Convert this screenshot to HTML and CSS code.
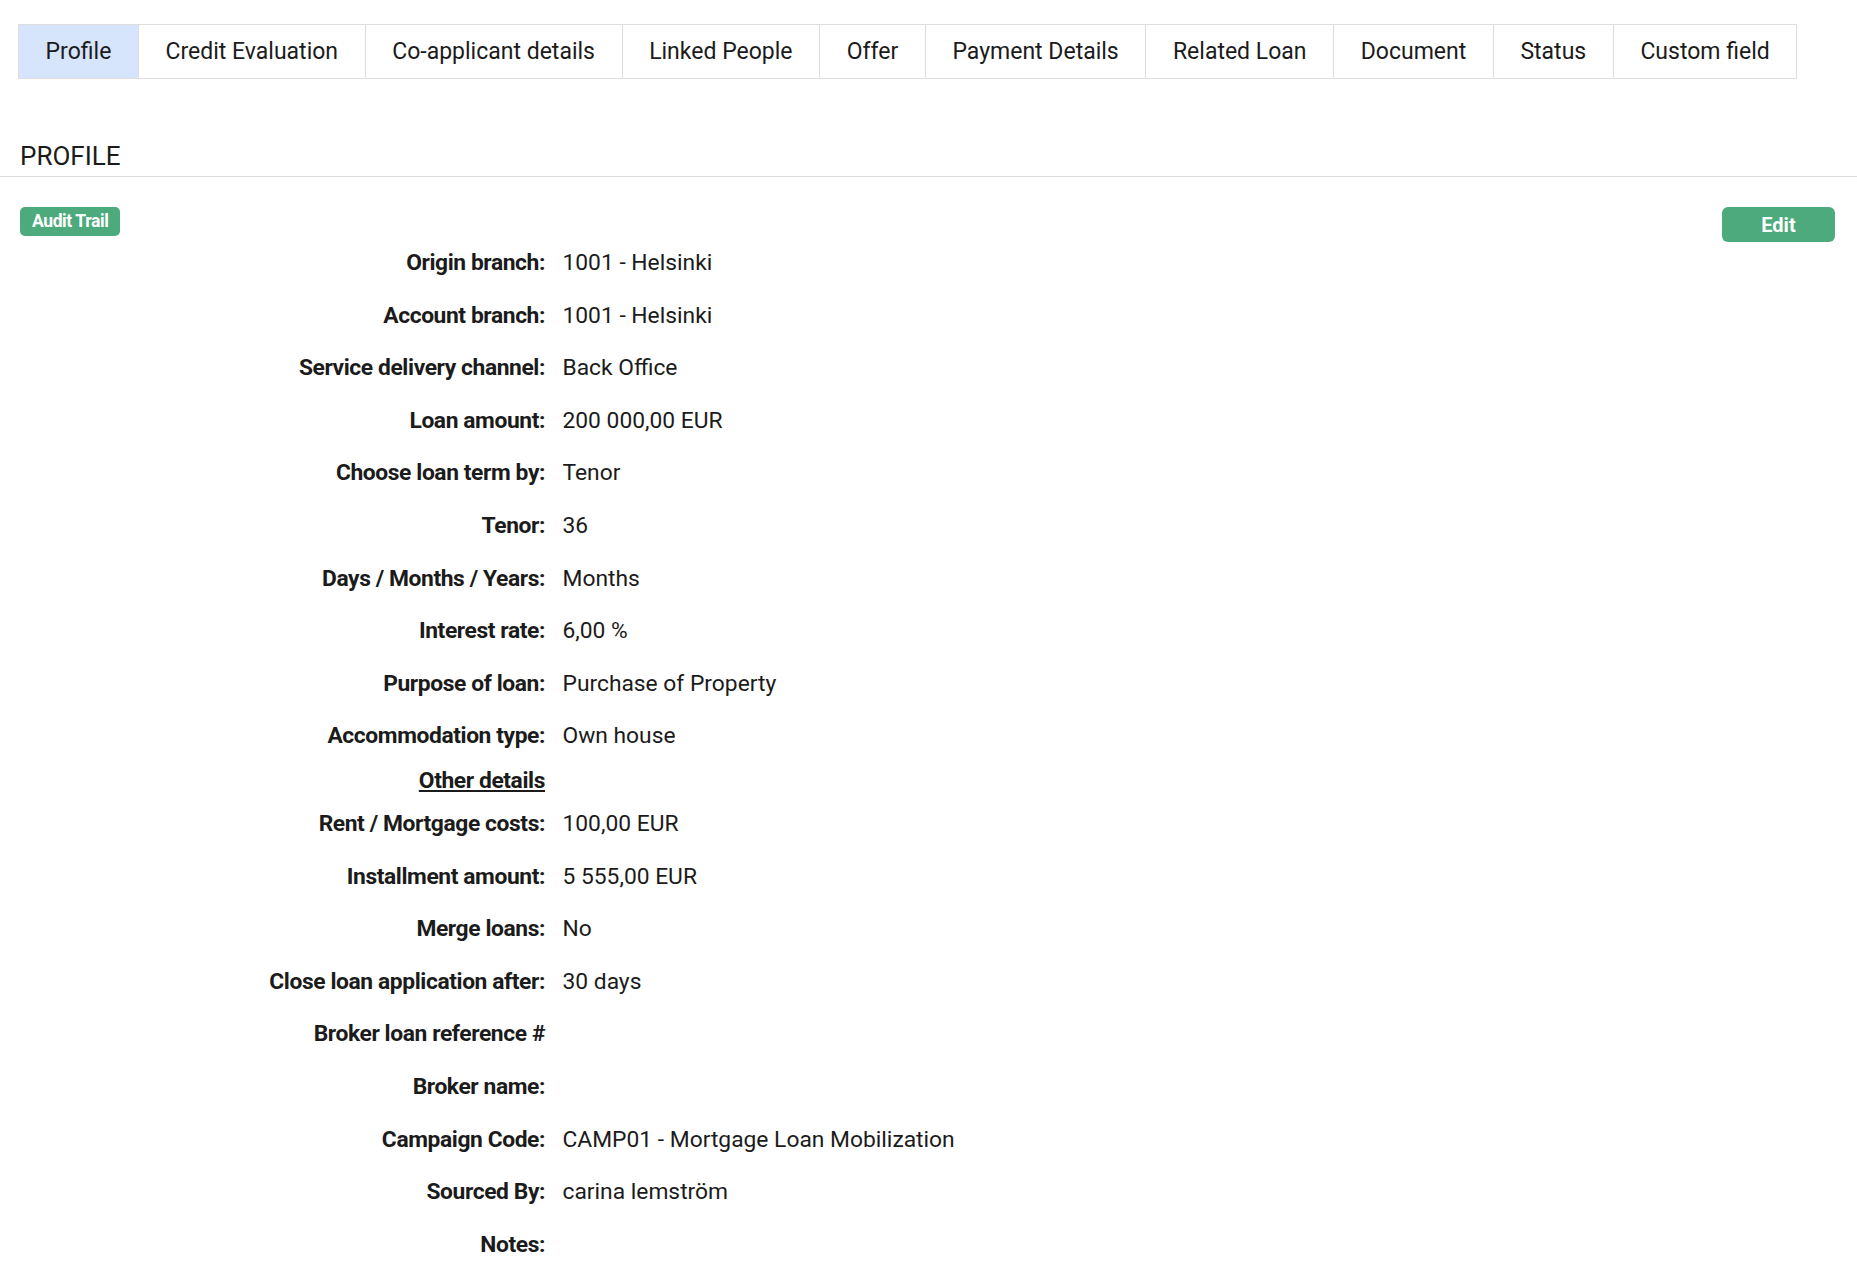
FILE: index.html
```html
<!DOCTYPE html>
<html lang="en">
<head>
    <meta charset="utf-8">
    <title>Loan application - Profile</title>
    <link rel="stylesheet" href="styles.css">
</head>
<body>
<ul class="tabs">
    <li class="tab active">Profile</li>
    <li class="tab">Credit Evaluation</li>
    <li class="tab">Co-applicant details</li>
    <li class="tab">Linked People</li>
    <li class="tab">Offer</li>
    <li class="tab">Payment Details</li>
    <li class="tab">Related Loan</li>
    <li class="tab">Document</li>
    <li class="tab">Status</li>
    <li class="tab">Custom field</li>
</ul>

<h2 class="section-title">PROFILE</h2>

<div class="profile">
    <div class="toolbar">
        <a class="badge" href="#">Audit Trail</a>
        <button class="btn-edit" type="button">Edit</button>
    </div>
    <dl class="details">
        <div class="row"><dt>Origin branch:</dt><dd>1001 - Helsinki</dd></div>
        <div class="row"><dt>Account branch:</dt><dd>1001 - Helsinki</dd></div>
        <div class="row"><dt>Service delivery channel:</dt><dd>Back Office</dd></div>
        <div class="row"><dt>Loan amount:</dt><dd>200 000,00 EUR</dd></div>
        <div class="row"><dt>Choose loan term by:</dt><dd>Tenor</dd></div>
        <div class="row"><dt>Tenor:</dt><dd>36</dd></div>
        <div class="row"><dt>Days / Months / Years:</dt><dd>Months</dd></div>
        <div class="row"><dt>Interest rate:</dt><dd>6,00 %</dd></div>
        <div class="row"><dt>Purpose of loan:</dt><dd>Purchase of Property</dd></div>
        <div class="row"><dt>Accommodation type:</dt><dd>Own house</dd></div>
        <div class="subhead"><dt><a href="#">Other details</a></dt></div>
        <div class="row"><dt>Rent / Mortgage costs:</dt><dd>100,00 EUR</dd></div>
        <div class="row"><dt>Installment amount:</dt><dd>5 555,00 EUR</dd></div>
        <div class="row"><dt>Merge loans:</dt><dd>No</dd></div>
        <div class="row"><dt>Close loan application after:</dt><dd>30 days</dd></div>
        <div class="row"><dt>Broker loan reference #</dt><dd></dd></div>
        <div class="row"><dt>Broker name:</dt><dd></dd></div>
        <div class="row"><dt>Campaign Code:</dt><dd>CAMP01 - Mortgage Loan Mobilization</dd></div>
        <div class="row"><dt>Sourced By:</dt><dd>carina lemström</dd></div>
        <div class="row"><dt>Notes:</dt><dd></dd></div>
    </dl>
</div>
</body>
</html>
```

FILE: styles.css
```css
/* Page */
body {
    margin: 0;
    font-family: Roboto, "Liberation Sans", sans-serif;
    font-size: 22.8px;
    color: #1b1b1b;
    background: #fff;
}

/* Tabs */
.tabs {
    display: flex;
    margin: 24px 0 0 18px;
    padding: 0;
    list-style: none;
}
.tab {
    padding: 0 26.6px;
    font-size: 23px;
    line-height: 53px;
    border: 1px solid #dedede;
    border-left: none;
    white-space: nowrap;
}
.tab:first-child {
    border-left: 1px solid #dedede;
}
.tab.active {
    background: #d6e4fc;
}

/* Section heading */
.section-title {
    margin: 62px 0 0;
    padding: 0 0 5px 20px;
    font-size: 26px;
    font-weight: normal;
    line-height: 30px;
    border-bottom: 1px solid #dcdcdc;
}

/* Profile block */
.profile {
    padding: 30px 22px 0 18px;
}
.toolbar {
    display: flex;
    justify-content: space-between;
    align-items: flex-start;
    height: 30px;
}
.badge {
    margin-left: 2px;
    padding: 0 12px;
    line-height: 29px;
    font-size: 17.5px;
    font-weight: bold;
    letter-spacing: -0.4px;
    color: #fff;
    background: #4caa7c;
    border-radius: 5px;
    text-decoration: none;
}
.btn-edit {
    width: 113px;
    height: 35px;
    padding: 0;
    font-family: inherit;
    font-size: 20px;
    font-weight: bold;
    color: #fff;
    background: #4caa7c;
    border: none;
    border-radius: 6px;
}

/* Detail rows */
.details {
    margin: 0;
}
.row, .subhead {
    display: grid;
    grid-template-columns: 527px 1fr;
    column-gap: 17.5px;
}
.row {
    padding: 10px 0;
    line-height: 32.6px;
}
.subhead {
    line-height: 35px;
}
dt {
    text-align: right;
    font-weight: bold;
    letter-spacing: -0.4px;
}
dd {
    margin: 0;
}
.subhead a {
    color: inherit;
}
```
